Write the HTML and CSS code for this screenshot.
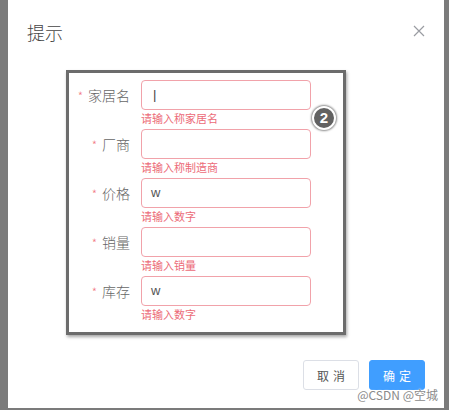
FILE: index.html
```html
<!DOCTYPE html>
<html lang="zh">
<head>
<meta charset="utf-8">
<link rel="stylesheet" href="styles.css">
</head>
<body>
<div class="dialog">
  <div class="header">
    <span class="title">提示</span>
    <svg class="close" width="12" height="12" viewBox="0 0 12 12"><path d="M1 1L11 11M11 1L1 11" stroke="#9a9ca2" stroke-width="1.2" fill="none"/></svg>
  </div>
  <div class="body">
    <div class="annot">
      <form class="form">
        <div class="row">
          <label class="label"><span class="star">*</span>家居名</label>
          <div class="field"><div class="input"><span class="caret">|</span></div><div class="err">请输入称家居名</div></div>
        </div>
        <div class="row">
          <label class="label"><span class="star">*</span>厂商</label>
          <div class="field"><div class="input"></div><div class="err">请输入称制造商</div></div>
        </div>
        <div class="row">
          <label class="label"><span class="star">*</span>价格</label>
          <div class="field"><div class="input">w</div><div class="err">请输入数字</div></div>
        </div>
        <div class="row">
          <label class="label"><span class="star">*</span>销量</label>
          <div class="field"><div class="input"></div><div class="err">请输入销量</div></div>
        </div>
        <div class="row">
          <label class="label"><span class="star">*</span>库存</label>
          <div class="field"><div class="input">w</div><div class="err">请输入数字</div></div>
        </div>
      </form>
      <div class="badge">2</div>
    </div>
  </div>
  <div class="footer">
    <button class="btn">取消</button>
    <button class="btn primary">确定</button>
    <span class="mark">@CSDN @空城</span>
  </div>
</div>
</body>
</html>
```
FILE: styles.css
```css
html, body { margin: 0; padding: 0; }
body {
  background: #7b7b7b;
  width: 449px;
  height: 410px;
  overflow: hidden;
  font-family: "Noto Sans CJK SC", "Liberation Sans", sans-serif;
}
.dialog {
  margin-left: 8px;
  width: 436px;
  height: 408px;
  background: #fff;
  position: relative;
  display: flex;
  flex-direction: column;
}
.header {
  display: flex;
  justify-content: space-between;
  align-items: center;
  padding: 18px 20px 0 19px;
  height: 28px;
}
.title {
  font-size: 18px;
  color: #454545;
  line-height: 28px;
  font-weight: 300;
}
.close { margin-top: -2px; margin-right: -1px; }
.body {
  padding: 24px 0 0 58px;
}
.annot {
  position: relative;
  width: 274px;
  height: 259px;
  border: 3px solid #6c6c6c;
  box-shadow: 1px 2px 3px rgba(0,0,0,0.35);
}
.form {
  margin: 0;
  padding: 7px 0 0 0;
  display: flex;
  flex-direction: column;
}
.row {
  display: flex;
  align-items: flex-start;
  height: 49px;
}
.label {
  width: 61px;
  padding-right: 11px;
  text-align: right;
  font-size: 14px;
  line-height: 30px;
  color: #666;
  font-weight: 300;
}
.star {
  color: #f27b85;
  margin-right: 5px;
  font-size: 12px;
}
.field { display: flex; flex-direction: column; }
.input {
  box-sizing: border-box;
  width: 170px;
  height: 30px;
  border: 1px solid #f1a2aa;
  border-radius: 4px;
  padding-left: 9px;
  font-size: 13px;
  line-height: 28px;
  color: #555;
  font-family: "Liberation Sans", sans-serif;
}
.caret { color: #444; font-weight: 300; margin-left: 2px; }
.err {
  font-size: 11px;
  line-height: 14px;
  color: #ec6b78;
  margin-top: 1px;
}
.badge {
  position: absolute;
  left: 243px;
  top: 33px;
  width: 20px;
  height: 20px;
  border-radius: 50%;
  background: #626262;
  border: 2px solid #fff;
  box-shadow: 0 0 2px 1px rgba(0,0,0,0.45);
  color: #fff;
  font-family: "Liberation Sans", sans-serif;
  font-weight: bold;
  font-size: 15px;
  line-height: 20px;
  text-align: center;
}
.footer {
  margin-top: auto;
  display: flex;
  justify-content: flex-end;
  gap: 10px;
  padding: 0 19px 18px 0;
  position: relative;
}
.btn {
  width: 56px;
  height: 30px;
  border-radius: 3px;
  border: 1px solid #dcdfe6;
  background: #fff;
  color: #555;
  font-size: 12px;
  letter-spacing: 4px;
  text-indent: 4px;
  font-family: "Noto Sans CJK SC", sans-serif;
  padding: 0;
}
.btn.primary {
  background: #409eff;
  border-color: #409eff;
  color: #fff;
}
.mark {
  position: absolute;
  right: 6px;
  bottom: 5px;
  font-size: 12px;
  color: #8a8a8a;
  text-shadow: 0 0 2px #fff, 0 0 2px #fff;
}
```
